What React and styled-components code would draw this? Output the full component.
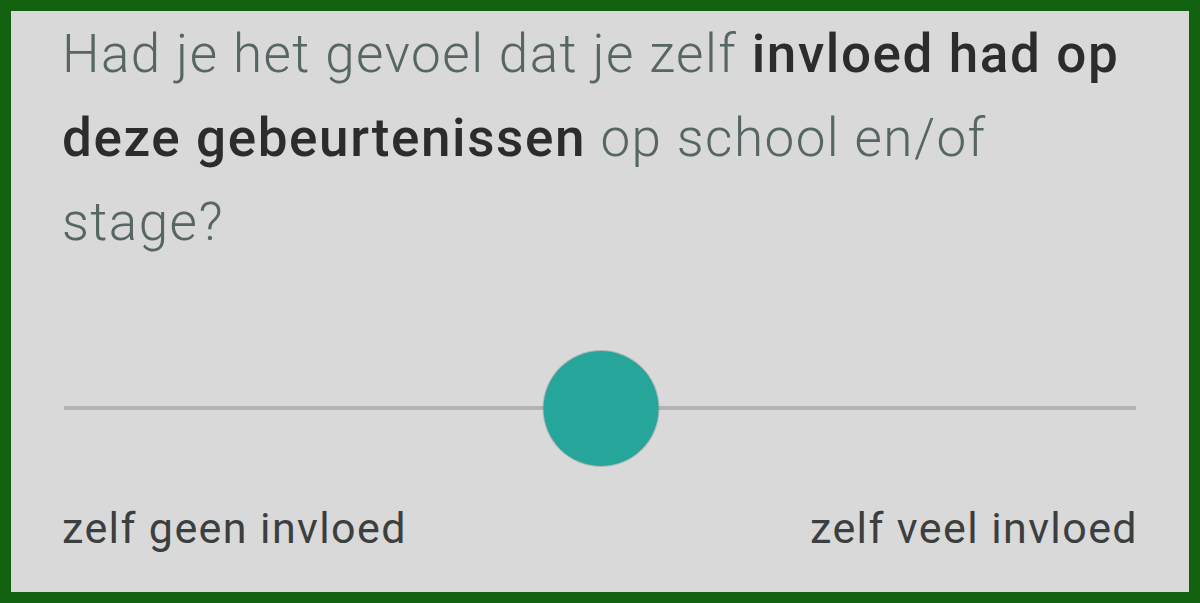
import React, {useState} from "react";
import styled, {createGlobalStyle} from "styled-components";

const GlobalStyle = createGlobalStyle`
    html, body {
        margin: 0;
        padding: 0;
        background: #13620f;
    }
`;

const Frame = styled.div`
    box-sizing: border-box;
    width: 1200px;
    height: 603px;
    border: 11px solid #13620f;
    background: #d9d9d9;
    padding: 1px 51px 0 51px;
    font-family: Roboto, "Noto Sans", sans-serif;
    display: flex;
    flex-direction: column;
`;

const Question = styled.p`
    margin: 0;
    font-size: 53px;
    font-weight: 300;
    line-height: 84px;
    color: #566664;
    letter-spacing: 1.45px;

    strong {
        font-weight: 500;
        color: #2c2c2c;
        letter-spacing: 1.6px;
    }
`;

const SliderWrap = styled.div`
    position: relative;
    height: 116px;
    margin: 86px 0 0 2px;
    display: flex;
    align-items: center;
`;

const Track = styled.div`
    flex: 1;
    height: 4px;
    background: #b3b3b3;
    margin-right: 2px;
`;

const Thumb = styled.div`
    position: absolute;
    top: 1px;
    width: 115px;
    height: 115px;
    border-radius: 50%;
    background: #26a69a;
    box-shadow: 0 0 0 1px rgba(140, 140, 140, 0.45);
    transform: translateX(-50%);
`;

const Labels = styled.div`
    display: flex;
    justify-content: space-between;
    margin-top: 34px;
    font-size: 43px;
    font-weight: 400;
    color: #3b3f3f;
    line-height: 56px;
    letter-spacing: 1.4px;
`;

export default function App() {
    const [value] = useState(50);

    return (
        <>
            <GlobalStyle/>
            <Frame>
                <Question>
                    Had je het gevoel dat je zelf <strong>invloed had op deze gebeurtenissen</strong> op school en/of stage?
                </Question>
                <SliderWrap>
                    <Track/>
                    <Thumb style={{left: `${value}%`}}/>
                </SliderWrap>
                <Labels>
                    <span>zelf geen invloed</span>
                    <span>zelf veel invloed</span>
                </Labels>
            </Frame>
        </>
    );
}
